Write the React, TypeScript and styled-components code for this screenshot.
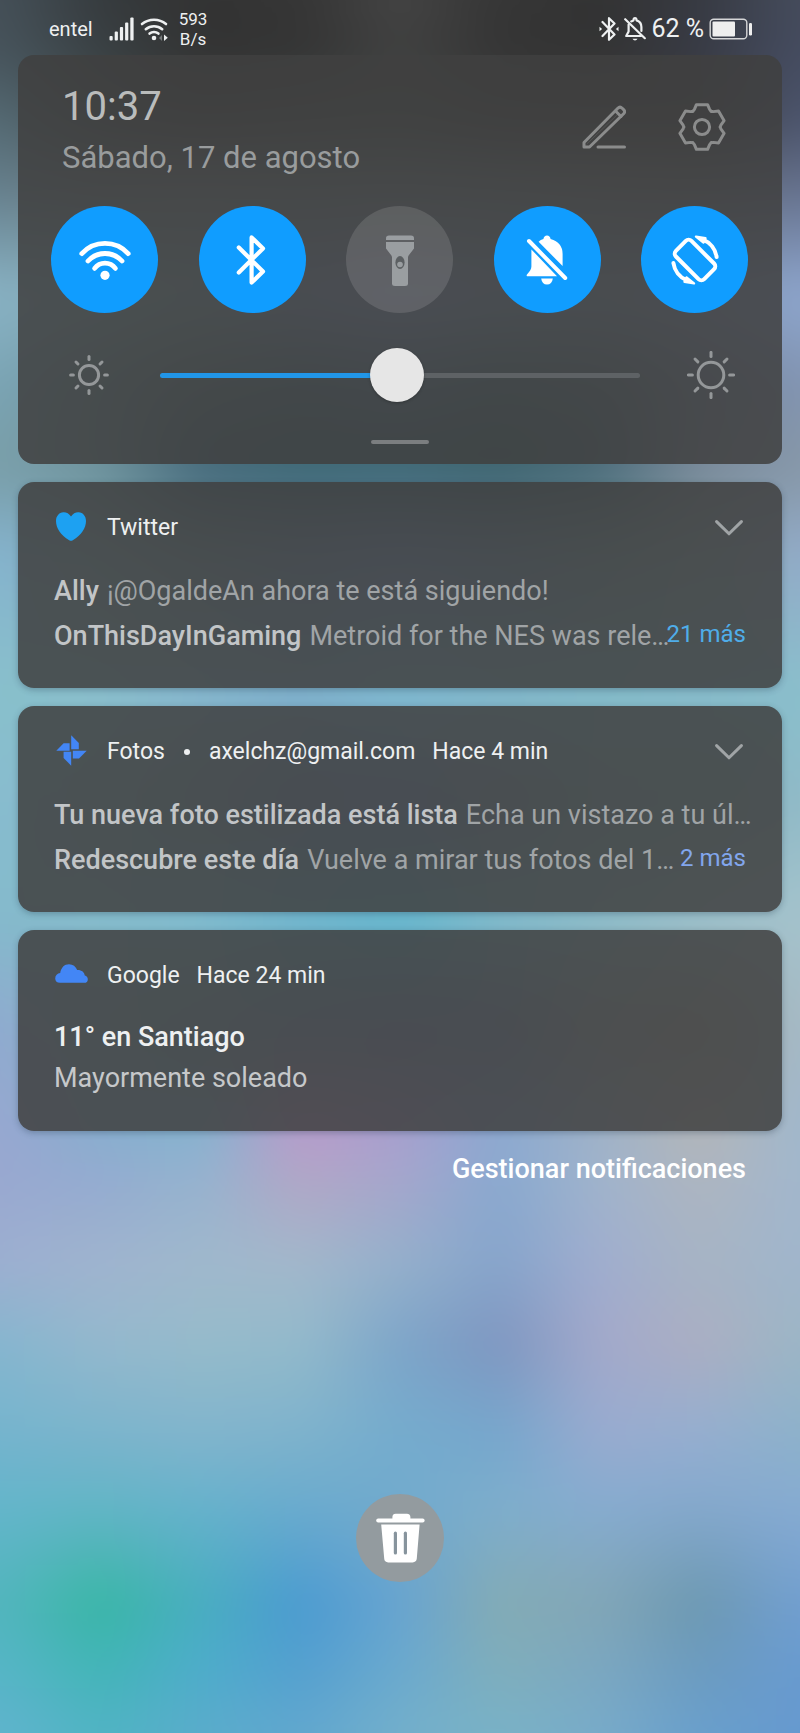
import React, { useState } from "react";
import styled, { createGlobalStyle } from "styled-components";

const GlobalStyle = createGlobalStyle`
  *, *::before, *::after { box-sizing: border-box; }
  body { margin: 0; background: #6fb0cb; }
  h1, h2, h3, p, ul { margin: 0; padding: 0; font-weight: 400; }
  button { border: 0; padding: 0; background: none; color: inherit; font: inherit; cursor: pointer; }
  svg { display: block; flex: none; }
`;

const Screen = styled.div`
  display: grid;
  min-height: 100vh;
  font-family: Roboto, "Noto Sans", sans-serif;
  color: #eef0f1;
`;

/* ---------- wallpaper: rows of colour, each fading into the next ---------- */

/* The painted mesh bleeds past the screen so its blur never fades at the edges. */
const BLEED = 60;
const inset = (percent: number) => `calc(${BLEED}px + (100% - ${BLEED * 2}px) * ${percent / 100})`;

const Wallpaper = styled.div`
  grid-area: 1 / 1;
  display: grid;
  overflow: hidden;
`;

const Mesh = styled.div`
  display: grid;
  margin: -${BLEED}px;
  filter: blur(20px);
`;

const Band = styled.div<{ $from: number; $to: number; $colors: string[] }>`
  grid-area: 1 / 1;
  background: linear-gradient(
    to right,
    ${(p) => p.$colors.map((c, i) => `${c} ${inset((i * 100) / (p.$colors.length - 1))}`).join(", ")}
  );
  mask-image: linear-gradient(to bottom, transparent ${(p) => inset(p.$from)}, #000 ${(p) => inset(p.$to)});
`;

const bands: { at: number; colors: string }[] = [
  { at: 0, colors: "#455058 #363b3e #333333 #363636 #444444 #363636 #333333 #373a42 #454c5c" },
  { at: 3, colors: "#47545c #3a4144 #333333 #343434 #404040 #353535 #333333 #383b46 #454c60" },
  { at: 7, colors: "#556b75 #464f50 #404444 #444a4a #454f4c #404242 #404040 #404040 #4c556e" },
  { at: 11, colors: "#66808d #6c7a80 #707c82 #6a7c80 #6e7c84 #6a7a80 #6a7478 #687078 #66728f" },
  { at: 17, colors: "#8ab3c6 #84aeb4 #80a4ae #8298bc #8aa0c8 #829eba #829ab2 #8a9cbc #8ea7cf" },
  { at: 22, colors: "#7ba5b5 #6e929c #5c7c82 #507482 #587892 #4c727c #587480 #74869c #8294b2" },
  { at: 27, colors: "#7a9ea8 #6e929c #44687a #3c6672 #3c6670 #3c626c #4a6a78 #7a8999 #8798a8" },
  { at: 32, colors: "#85b3cf #84aeb8 #789eaa #7294b4 #7898c4 #7296b2 #7aa0a8 #88aaae #93abca" },
  { at: 40, colors: "#89c0cb #8abfcd #86b8d0 #7fb2cc #7fbcd0 #82bacc #84bccc #86bccc #8abfcc" },
  { at: 46, colors: "#88bcd0 #86b8c4 #80a8b8 #7898bc #7898c4 #809eb4 #84b0b8 #86b4b8 #90bac8" },
  { at: 53, colors: "#84bacb #85bccc #80bdd0 #70b9cf #64bbcf #80bdcc #8cbdcb #9bc0cc #a5c3cc" },
  { at: 59, colors: "#8fabd0 #86b0c0 #80a8b8 #7a9cb8 #7c94b8 #7e98b8 #98a8ac #a2a8a4 #a5bac6" },
  { at: 65, colors: "#97a7d0 #87aecf #84b3cf #bb9acb #a89fcf #8ca9d1 #9fb2c8 #b4b6b8 #a0b7cc" },
  { at: 68, colors: "#99a8d0 #94abd0 #95b3cf #b2a6c6 #a6a6cc #89a9d0 #a0b4cc #aeb5c0 #a2b7cd" },
  { at: 73, colors: "#9dafd0 #a0b4cf #a0b8cc #a2b8cb #94b0cb #86a4cb #a0adcf #a6b4c4 #a0b5cc" },
  { at: 77.5, colors: "#86b6cf #94b8cd #96bbcb #93bacb #7da5c9 #7f96c0 #a3a9cb #acaec2 #9cb6c5" },
  { at: 83, colors: "#74b4cd #7ab4cc #80b4cc #7db2cc #74accd #76a7cd #98abd0 #94aed0 #8cb1cb" },
  { at: 87, colors: "#64b5cb #62b5c6 #66b2cc #6aabce #72aacd #7eaecc #86acd0 #84a8cc #86abd2" },
  { at: 92.5, colors: "#52b5bd #38b7a4 #48aebf #4a9ad1 #68a4d0 #84abb4 #82a6b6 #6c98b0 #729fd0" },
  { at: 96, colors: "#56b5c6 #41b5b6 #4dadcb #539fd0 #6aa9cf #80aebb #7ca7c0 #6c9bbe #699bd0" },
  { at: 100, colors: "#60b4cd #50b4c4 #5aaccb #61a7cf #73afcb #79b2c6 #78abc9 #699fcc #6699cf" },
];

/* ---------- page ---------- */

const Shade = styled.main`
  grid-area: 1 / 1;
  position: relative;
  display: flex;
  flex-direction: column;
  min-width: 0;
  padding-bottom: 151px;
`;

const StatusBar = styled.header`
  display: flex;
  align-items: center;
  justify-content: space-between;
  height: 55px;
  padding: 2px 47px 0 49px;
`;

const StatusGroup = styled.div<{ $gap: number }>`
  display: flex;
  align-items: center;
  gap: ${(p) => p.$gap}px;
`;

const Carrier = styled.span`
  margin-right: 10px;
  font-size: 20px;
  line-height: 24px;
`;

const Speed = styled.span`
  margin-left: 5px;
  font-size: 17px;
  line-height: 20px;
  text-align: center;
`;

const Percent = styled.span`
  font-size: 25px;
  line-height: 28px;
`;

const Stack = styled.div`
  display: flex;
  flex-direction: column;
  gap: 18px;
  padding: 0 18px;
`;

const Card = styled.section`
  border-radius: 16px;
  background: rgba(64, 64, 64, 0.86);
  box-shadow: 0 2px 6px rgba(30, 50, 70, 0.3);
`;

const Panel = styled(Card)`
  display: flex;
  flex-direction: column;
  padding: 30px 0 20px;
  box-shadow: none;
`;

const PanelHead = styled.div`
  display: flex;
  justify-content: space-between;
  align-items: center;
  padding: 0 56px 0 44px;
`;

const Clock = styled.h1`
  font-size: 40px;
  line-height: 44px;
  color: #babcbc;
`;

const DateLine = styled.p`
  margin-top: 9px;
  font-size: 31px;
  line-height: 40px;
  color: #999c9d;
`;

const Actions = styled.div`
  display: flex;
  align-items: center;
  gap: 52px;
  padding-bottom: 9px;
  color: #8b8c8c;
`;

const Toggles = styled.div`
  display: flex;
  justify-content: space-between;
  margin-top: 28px;
  padding: 0 34px 0 33px;
`;

const Toggle = styled.button`
  display: flex;
  align-items: center;
  justify-content: center;
  width: 107px;
  height: 107px;
  border-radius: 50%;
  background: rgba(255, 255, 255, 0.12);
  color: #9a9ea1;

  &[aria-pressed="true"] {
    background: #109dff;
    color: #fff;
  }
`;

const Brightness = styled.div`
  display: flex;
  align-items: center;
  margin-top: 35px;
  padding: 0 47px 0 51px;
  color: #949799;
`;

const Range = styled.input`
  flex: 1;
  min-width: 0;
  height: 54px;
  margin: 0 47px 0 51px;
  appearance: none;
  background: none;

  &::-webkit-slider-runnable-track {
    height: 5px;
    border-radius: 3px;
    background: linear-gradient(to right, #2196e8 var(--level), #5e6265 var(--level));
  }

  &::-webkit-slider-thumb {
    appearance: none;
    width: 54px;
    height: 54px;
    margin-top: -25px;
    border-radius: 50%;
    background: #e6e6e6;
    box-shadow: 0 1px 3px rgba(0, 0, 0, 0.25);
  }
`;

const Handle = styled.div`
  align-self: center;
  width: 58px;
  height: 4px;
  margin-top: 38px;
  border-radius: 2px;
  background: #7b7e80;
`;

const Notice = styled(Card)`
  padding: 30px 36px 29px;
`;

const NoticeHead = styled.div`
  display: flex;
  align-items: center;
  height: 32px;
  margin-bottom: 25px;
  font-size: 23px;
  line-height: 32px;
  white-space: nowrap;
`;

const AppIcon = styled.span`
  display: flex;
  align-self: flex-start;
  align-items: center;
  justify-content: center;
  width: 34px;
  height: 29px;
  margin-right: 19px;
`;

const AppName = styled.h2`
  font-size: 23px;
`;

const Dot = styled.span`
  width: 6px;
  height: 6px;
  margin: 0 19px;
  border-radius: 50%;
  background: #eef0f1;
`;

const Time = styled.span`
  margin-left: 17px;
`;

const Expand = styled.button`
  margin-left: auto;
  padding: 4px 3px;
  color: #a0a4a6;
`;

const Line = styled.div`
  display: flex;
  justify-content: space-between;
  font-size: 27px;
  line-height: 45px;
  white-space: nowrap;
  color: #a0a4a6;
`;

const LineText = styled.p`
  min-width: 0;
`;

const Sender = styled.strong`
  margin-right: 8px;
  font-weight: 500;
  color: #c2c5c7;
`;

const More = styled.button<{ $color: string }>`
  flex: none;
  height: 40px;
  font-size: 24px;
  line-height: 40px;
  color: ${(p) => p.$color};
`;

const WeatherText = styled.div`
  padding-bottom: 3px;
  font-size: 27px;
  line-height: 41px;
  color: #c6c8ca;
`;

const WeatherTitle = styled.h3`
  font-size: 27px;
  font-weight: 500;
  color: #eef0f1;
`;

const Manage = styled.button`
  align-self: flex-end;
  padding: 0 36px;
  font-size: 27px;
  font-weight: 500;
  line-height: 40px;
  color: #fff;
`;

const Clear = styled.button`
  display: flex;
  align-items: center;
  justify-content: center;
  align-self: center;
  width: 88px;
  height: 88px;
  margin-top: auto;
  border-radius: 50%;
  background: #939b9f;
  color: #fff;
`;

/* ---------- icons ---------- */

const stroke = {
  fill: "none",
  stroke: "currentColor",
  strokeLinecap: "round",
  strokeLinejoin: "round",
} as const;

const SignalIcon = () => (
  <svg width="25" height="24" viewBox="0 0 25 24" fill="currentColor" aria-hidden="true">
    <rect x="0.5" y="19" width="3.2" height="4.5" rx="1" />
    <rect x="5.7" y="14.5" width="3.2" height="9" rx="1" />
    <rect x="10.9" y="10" width="3.2" height="13.5" rx="1" />
    <rect x="16.1" y="5.5" width="3.2" height="18" rx="1" />
    <rect x="21.3" y="0.5" width="3.3" height="23" rx="1" />
  </svg>
);

const StatusWifiIcon = () => (
  <svg width="28" height="24" viewBox="0 0 28 24" {...stroke} strokeWidth="2.6" aria-hidden="true">
    <path d="M2 7A19 19 0 0 1 26 7" />
    <path d="M5.8 12.2A13 13 0 0 1 22.2 12.2" />
    <path d="M9.6 16.6A7 7 0 0 1 18.4 16.6" />
    <circle cx="14" cy="21" r="2.3" fill="currentColor" stroke="none" />
    <path d="M24 17.6v6.4l3.8-3.2z" fill="currentColor" stroke="none" />
    <path d="M22 18v6l-3-3z" fill="currentColor" stroke="none" opacity="0.35" />
  </svg>
);

const StatusBluetoothIcon = () => (
  <svg width="20" height="24" viewBox="0 0 20 24" {...stroke} strokeWidth="2.2" aria-hidden="true">
    <path d="M3.5 5L15.5 17.5L10 22.8V1.2L15.5 6.5L3.5 19" />
    <path d="M0.5 9.8v4.4l2.6-2.2zM19.5 9.8v4.4L16.9 12z" fill="currentColor" stroke="none" />
  </svg>
);

const StatusBellOffIcon = () => (
  <svg width="22" height="24" viewBox="0 0 22 24" {...stroke} strokeWidth="2.2" aria-hidden="true">
    <path d="M1.2 2.2L20.8 21.2" />
    <path d="M4.6 7.5V14.5L2.2 19H17" />
    <path d="M7.2 4.4L9.4 3.4Q9.6 1.2 11 1.2T12.6 3.4Q17.4 5 17.4 10V14" />
    <path d="M8.5 21.8h5q-0.8 1.6-2.5 1.6t-2.5-1.6z" fill="currentColor" stroke="none" />
  </svg>
);

const BatteryIcon = () => (
  <svg width="44" height="22" viewBox="0 0 44 22" aria-hidden="true">
    <rect x="1.2" y="1.2" width="36.6" height="19.6" rx="3.5" fill="none" stroke="#d5d6d8" strokeWidth="1.4" />
    <rect x="3.5" y="3.5" width="22.5" height="15" rx="1" fill="#eeeeee" />
    <rect x="40" y="5" width="3" height="12.5" rx="1.2" fill="#eeeeee" />
  </svg>
);

const EditIcon = () => (
  <svg width="44" height="44" viewBox="0 0 44 44" {...stroke} strokeWidth="3" aria-hidden="true">
    <path d="M2 42V37.5L35.8 3.2Q38 1 40.2 3.2L41.6 4.6Q43.6 6.6 41.6 8.8L7.5 42Z" />
    <path d="M33.5 6L39 11.5" />
    <path d="M5 38.8L36.5 8.5" strokeWidth="1" opacity="0.25" />
    <path d="M16 42H42.5" />
  </svg>
);

const gearPoints = Array.from({ length: 6 }, (_, i) => {
  const a = (i * Math.PI) / 3;
  const tooth = [[-9.2, -15.6], [-7.6, -17.6], [-5.6, -22.3], [5.6, -22.3], [7.6, -17.6], [9.2, -15.6]];
  return tooth
    .map(([x, y]) => {
      const px = 24 + x * Math.cos(a) - y * Math.sin(a);
      const py = 24 + x * Math.sin(a) + y * Math.cos(a);
      return `${px.toFixed(2)},${py.toFixed(2)}`;
    })
    .join(" ");
}).join(" ");

const GearIcon = () => (
  <svg width="48" height="48" viewBox="0 0 48 48" {...stroke} strokeWidth="3" aria-hidden="true">
    <polygon points={gearPoints} />
    <circle cx="24" cy="24" r="7.6" />
  </svg>
);

const WifiIcon = () => (
  <svg width="52" height="52" viewBox="0 0 52 52" {...stroke} strokeWidth="4.8" aria-hidden="true">
    <path d="M2.8 19.6A31.5 31.5 0 0 1 49.2 19.6" />
    <path d="M9 27A23 23 0 0 1 43 27" />
    <path d="M15.6 34.4A13 13 0 0 1 36.4 34.4" />
    <circle cx="26" cy="41.3" r="4.6" fill="currentColor" stroke="none" />
  </svg>
);

const BluetoothIcon = () => (
  <svg width="52" height="52" viewBox="0 0 52 52" {...stroke} strokeWidth="4.2" aria-hidden="true">
    <path d="M12.8 13.5L37 37.6L25.6 48.6V3.4L37 14.4L12.8 38.5" />
  </svg>
);

const FlashlightIcon = () => (
  <svg width="52" height="52" viewBox="0 0 52 52" fill="currentColor" aria-hidden="true">
    <path d="M12 6V4.2Q12 1.4 15 1.4H37Q40 1.4 40 4.2V6Z" />
    <path d="M12 8H40V14.5L34.6 21.5Q34 22.4 34 23.5V49.5Q34 52 31 52H21Q18 52 18 49.5V23.5Q18 22.4 17.4 21.5L12 14.5Z" />
    <ellipse cx="26" cy="28.5" rx="4.6" ry="6.4" fill="#5c6063" />
    <circle cx="26" cy="30.5" r="2.8" />
  </svg>
);

const BellOffIcon = () => (
  <svg width="52" height="52" viewBox="0 0 52 52" fill="currentColor" aria-hidden="true">
    <path d="M8 7L44.2 44" {...stroke} strokeWidth="4" />
    <path d="M10.4 15.4L36 42.2H6Q5.2 41.4 6 40.4Q10.4 36 10.4 32.6Z" />
    <path d="M17.6 7.8Q19.6 5.8 22.4 5Q23 1.4 26 1.4T29.6 5Q41.6 8.4 41.6 20V32Z" />
    <path d="M20.2 44.6H31.8Q31 50.6 26 50.6T20.2 44.6Z" />
  </svg>
);

const RotateIcon = () => (
  <svg width="52" height="52" viewBox="0 0 52 52" {...stroke} strokeWidth="4" aria-hidden="true">
    <rect x="6" y="15" width="40" height="22" rx="4" transform="rotate(45 26 26)" />
    <path d="M34 5.6A22 22 0 0 1 47.6 23" />
    <path d="M27 2.6L36.5 4.2L34.5 8.6Z" fill="currentColor" strokeWidth="2.4" />
    <path d="M18 46.4A22 22 0 0 1 4.4 29" />
    <path d="M25 49.4L15.5 47.8L17.5 43.4Z" fill="currentColor" strokeWidth="2.4" />
  </svg>
);

const SunIcon = ({ size, ring, from, to }: { size: number; ring: number; from: number; to: number }) => (
  <svg width={size} height={size} viewBox={`${-size / 2} ${-size / 2} ${size} ${size}`} {...stroke} strokeWidth="3" aria-hidden="true">
    <circle r={ring} />
    {[0, 45, 90, 135, 180, 225, 270, 315].map((deg) => (
      <path key={deg} d={`M0 ${from}V${to}`} transform={`rotate(${deg})`} />
    ))}
  </svg>
);

const ChevronIcon = () => (
  <svg width="28" height="16" viewBox="0 0 28 16" {...stroke} strokeWidth="3" aria-hidden="true">
    <path d="M1.6 1.6L14 13.8L26.4 1.6" />
  </svg>
);

const HeartIcon = () => (
  <svg width="30" height="29" viewBox="0 0 30 29" fill="#1da1f2" aria-hidden="true">
    <path d="M15 4.6C16.8 1.4 20 0 22.6 0.2C27 0.5 30 4 30 9C30 16 25.5 23 16.8 28.2Q15 29.2 13.2 28.2C4.5 23 0 16 0 9C0 4 3 0.5 7.4 0.2C10 0 13.2 1.4 15 4.6Z" />
  </svg>
);

const PinwheelIcon = () => (
  <svg width="31" height="31" viewBox="0 0 31 31" fill="#4386f5" aria-hidden="true">
    <path d="M15.2 0.3L22.8 8V14.2H15.2Z" />
    <path d="M30.7 15.7L23 23.4H16.8V15.7Z" />
    <path d="M15.2 30.7L7.6 23V16.8H15.2Z" />
    <path d="M0.3 15.7L7.6 8.2H13.6V15.7Z" />
  </svg>
);

const CloudIcon = () => (
  <svg width="33" height="21" viewBox="0 0 33 21" fill="#4386f5" aria-hidden="true">
    <path d="M5 18.8C2 18.8 0.2 17 0.2 14.4C0.2 11.4 2.4 9.4 5.2 9C6 3.6 9.4 0.2 14 0.2C18 0.2 20.8 2.4 22.2 6C26.6 5.8 29.4 8.2 29.8 11.6C31.8 12.2 32.8 13.6 32.8 15.4C32.8 17.6 31.4 18.8 29.2 18.8Z" />
  </svg>
);

const TrashIcon = () => (
  <svg width="49" height="50" viewBox="0 0 49 50" fill="currentColor" aria-hidden="true">
    <path d="M16.4 6V4Q16.6 0.8 19.6 0.8H31Q34 0.8 34.4 4V6Z" />
    <rect x="0.2" y="5.4" width="48.4" height="4.2" rx="2" />
    <path d="M5.2 11.6H43.6L40.8 45.6Q40.4 49.4 36.6 49.4H12.2Q8.4 49.4 8.2 45.6Z" />
    <rect x="17.8" y="18.6" width="3.2" height="23" rx="1.6" fill="#87949d" />
    <rect x="27.8" y="18.6" width="3.2" height="23" rx="1.6" fill="#87949d" />
  </svg>
);

/* ---------- data ---------- */

const MAX_LEVEL = 255;

const toggles = [
  { name: "Wi-Fi", on: true, Icon: WifiIcon },
  { name: "Bluetooth", on: true, Icon: BluetoothIcon },
  { name: "Linterna", on: false, Icon: FlashlightIcon },
  { name: "Silencio", on: true, Icon: BellOffIcon },
  { name: "Rotación automática", on: true, Icon: RotateIcon },
];

const grouped = [
  {
    app: "Twitter",
    Icon: HeartIcon,
    more: "21 más",
    moreColor: "#4fade9",
    lines: [
      { sender: "Ally", text: "¡@OgaldeAn ahora te está siguiendo!" },
      { sender: "OnThisDayInGaming", text: "Metroid for the NES was rele…" },
    ],
  },
  {
    app: "Fotos",
    Icon: PinwheelIcon,
    account: "axelchz@gmail.com",
    time: "Hace 4 min",
    more: "2 más",
    moreColor: "#82a6ec",
    lines: [
      { sender: "Tu nueva foto estilizada está lista", text: "Echa un vistazo a tu úl…" },
      { sender: "Redescubre este día", text: "Vuelve a mirar tus fotos del 1…" },
    ],
  },
];

export default function App() {
  const [active, setActive] = useState(toggles.map((t) => t.on));
  const [level, setLevel] = useState(126);

  return (
    <Screen>
      <GlobalStyle />
      <Wallpaper aria-hidden="true">
        <Mesh>
          {bands.map((band, i) => (
            <Band
              key={band.at}
              $from={i ? bands[i - 1].at : -4}
              $to={i ? band.at : -3.5}
              $colors={band.colors.split(" ")}
            />
          ))}
        </Mesh>
      </Wallpaper>

      <Shade>
        <StatusBar>
          <StatusGroup $gap={6}>
            <Carrier>entel</Carrier>
            <SignalIcon />
            <StatusWifiIcon />
            <Speed>
              593
              <br />
              B/s
            </Speed>
          </StatusGroup>
          <StatusGroup $gap={5}>
            <StatusBluetoothIcon />
            <StatusBellOffIcon />
            <Percent>62 %</Percent>
            <BatteryIcon />
          </StatusGroup>
        </StatusBar>

        <Stack>
          <Panel>
            <PanelHead>
              <div>
                <Clock>10:37</Clock>
                <DateLine>Sábado, 17 de agosto</DateLine>
              </div>
              <Actions>
                <button aria-label="Editar">
                  <EditIcon />
                </button>
                <button aria-label="Ajustes">
                  <GearIcon />
                </button>
              </Actions>
            </PanelHead>

            <Toggles>
              {toggles.map(({ name, Icon }, i) => (
                <Toggle
                  key={name}
                  aria-label={name}
                  aria-pressed={active[i]}
                  onClick={() => setActive(active.map((on, n) => (n === i ? !on : on)))}
                >
                  <Icon />
                </Toggle>
              ))}
            </Toggles>

            <Brightness>
              <SunIcon size={40} ring={9.6} from={15.6} to={18.4} />
              <Range
                type="range"
                aria-label="Brillo"
                max={MAX_LEVEL}
                value={level}
                onChange={(e) => setLevel(Number(e.target.value))}
                style={{ "--level": `${(level / MAX_LEVEL) * 100}%` } as React.CSSProperties}
              />
              <SunIcon size={48} ring={12.8} from={18.6} to={22.6} />
            </Brightness>
            <Handle />
          </Panel>

          {grouped.map(({ app, Icon, account, time, more, moreColor, lines }) => (
            <Notice key={app}>
              <NoticeHead>
                <AppIcon>
                  <Icon />
                </AppIcon>
                <AppName>{app}</AppName>
                {account && (
                  <>
                    <Dot />
                    <span>{account}</span>
                  </>
                )}
                {time && <Time>{time}</Time>}
                <Expand aria-label={`Expandir ${app}`}>
                  <ChevronIcon />
                </Expand>
              </NoticeHead>
              {lines.map((line, i) => (
                <Line key={line.sender}>
                  <LineText>
                    <Sender>{line.sender}</Sender>
                    {line.text}
                  </LineText>
                  {i === lines.length - 1 && <More $color={moreColor}>{more}</More>}
                </Line>
              ))}
            </Notice>
          ))}

          <Notice>
            <NoticeHead>
              <AppIcon>
                <CloudIcon />
              </AppIcon>
              <AppName>Google</AppName>
              <Time>Hace 24 min</Time>
            </NoticeHead>
            <WeatherText>
              <WeatherTitle>11° en Santiago</WeatherTitle>
              <p>Mayormente soleado</p>
            </WeatherText>
          </Notice>

          <Manage>Gestionar notificaciones</Manage>
        </Stack>

        <Clear aria-label="Borrar todas las notificaciones">
          <TrashIcon />
        </Clear>
      </Shade>
    </Screen>
  );
}
